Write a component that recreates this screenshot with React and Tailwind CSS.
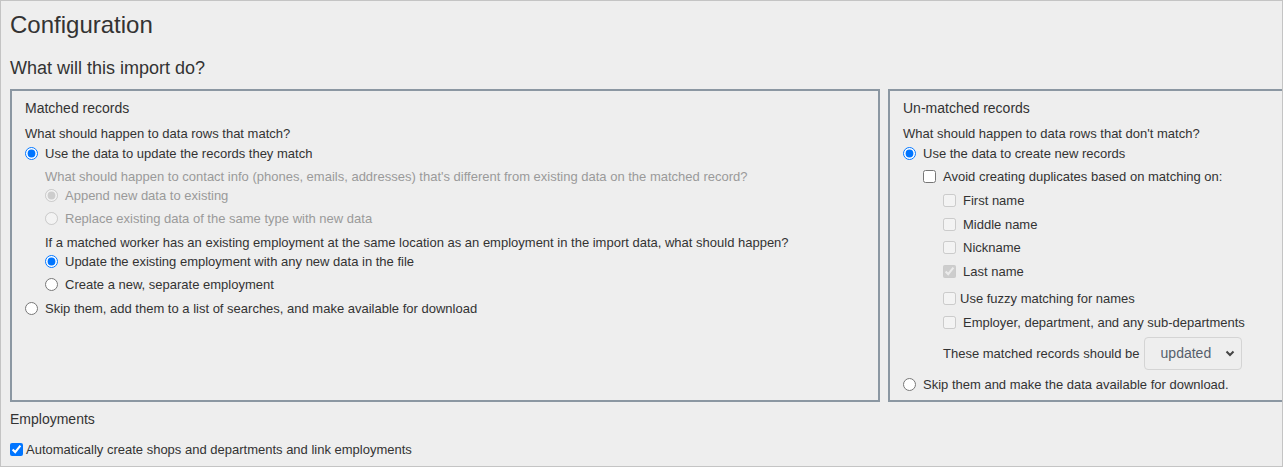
import { useState } from "react";

const font = { fontFamily: '"Liberation Sans", Arial, sans-serif' };

function Radio({ checked, disabled, name, label, onChange, className = "", muted }) {
  return (
    <label className={`flex h-[18px] items-center ${className}`}>
      <input
        type="radio"
        name={name}
        checked={checked}
        disabled={disabled}
        onChange={onChange}
        className="h-[13px] w-[13px] shrink-0"
      />
      <span className={`ml-[7px] whitespace-nowrap ${muted ? "text-[#9a9a9a]" : ""}`}>{label}</span>
    </label>
  );
}

function Check({ checked, disabled, label, onChange, className = "", gap = "ml-[7px]" }) {
  return (
    <label className={`flex h-[18px] items-center ${className}`}>
      <input
        type="checkbox"
        checked={checked}
        disabled={disabled}
        onChange={onChange}
        className="h-[13px] w-[13px] shrink-0"
      />
      <span className={`${gap} whitespace-nowrap`}>{label}</span>
    </label>
  );
}

export default function App() {
  const [matched, setMatched] = useState("update");
  const [employment, setEmployment] = useState("update");
  const [unmatched, setUnmatched] = useState("create");
  const [avoidDupes, setAvoidDupes] = useState(false);
  const [autoCreate, setAutoCreate] = useState(true);

  return (
    <div
      className="h-[467px] w-full overflow-hidden border border-[#c4c4c4] bg-[#eeeeee] pl-[9px] text-[13px] leading-[15px] text-[#333333]"
      style={font}
    >
      <h1 className="mt-[10px] text-[24px] leading-[28px]">Configuration</h1>
      <h2 className="mt-[18px] text-[18px] leading-[22px]">What will this import do?</h2>

      <div className="mt-[10px] flex gap-[8px]">
        <section className="h-[313px] w-[870px] shrink-0 border-2 border-[#8b97a2] px-[13px]">
          <div className="mt-[8px] flex h-[18px] items-center text-[14px]">Matched records</div>
          <div className="mt-[7px] flex h-[18px] items-center">What should happen to data rows that match?</div>
          <Radio
            className="mt-[2px]"
            name="matched"
            label="Use the data to update the records they match"
            checked={matched === "update"}
            onChange={() => setMatched("update")}
          />
          <div className="ml-[20px]">
            <div className="mt-[5px] flex h-[18px] items-center text-[#9a9a9a]">
              What should happen to contact info (phones, emails, addresses) that's different from existing data on the matched record?
            </div>
            <Radio className="mt-[1px]" name="contact" label="Append new data to existing" checked disabled muted readOnly />
            <Radio className="mt-[5px]" name="contact" label="Replace existing data of the same type with new data" checked={false} disabled muted />
            <div className="mt-[6px] flex h-[18px] items-center">
              If a matched worker has an existing employment at the same location as an employment in the import data, what should happen?
            </div>
            <Radio
              className="mt-[1px]"
              name="employment"
              label="Update the existing employment with any new data in the file"
              checked={employment === "update"}
              onChange={() => setEmployment("update")}
            />
            <Radio
              className="mt-[5px]"
              name="employment"
              label="Create a new, separate employment"
              checked={employment === "new"}
              onChange={() => setEmployment("new")}
            />
          </div>
          <Radio
            className="mt-[6px]"
            name="matched"
            label="Skip them, add them to a list of searches, and make available for download"
            checked={matched === "skip"}
            onChange={() => setMatched("skip")}
          />
        </section>

        <section className="h-[313px] w-[400px] shrink-0 border-2 border-[#8b97a2] px-[13px]">
          <div className="mt-[8px] flex h-[18px] items-center text-[14px]">Un-matched records</div>
          <div className="mt-[7px] flex h-[18px] items-center">What should happen to data rows that don't match?</div>
          <Radio
            className="mt-[2px]"
            name="unmatched"
            label="Use the data to create new records"
            checked={unmatched === "create"}
            onChange={() => setUnmatched("create")}
          />
          <div className="ml-[20px]">
            <Check
              className="mt-[5px]"
              label="Avoid creating duplicates based on matching on:"
              checked={avoidDupes}
              onChange={() => setAvoidDupes(!avoidDupes)}
            />
            <div className="ml-[20px]">
              <Check className="mt-[6px]" label="First name" checked={false} disabled />
              <Check className="mt-[6px]" label="Middle name" checked={false} disabled />
              <Check className="mt-[5px]" label="Nickname" checked={false} disabled />
              <Check className="mt-[6px]" label="Last name" checked disabled readOnly />
              <Check className="mt-[9px]" gap="ml-[4px]" label="Use fuzzy matching for names" checked={false} disabled />
              <Check className="mt-[6px]" label="Employer, department, and any sub-departments" checked={false} disabled />
              <div className="mt-[6px] flex items-center">
                <span className="whitespace-nowrap">These matched records should be</span>
                <div className="relative ml-[4px]">
                  <select
                    defaultValue="updated"
                    disabled
                    className="h-[33px] w-[98px] appearance-none rounded-[4px] border border-[#d4d4d4] bg-transparent pl-[16px] text-[14px] text-[#56606c] opacity-100"
                  >
                    <option value="updated">updated</option>
                    <option value="skipped">skipped</option>
                  </select>
                  <svg
                    className="pointer-events-none absolute right-[7px] top-[13px]"
                    width="10"
                    height="7"
                    viewBox="0 0 10 7"
                  >
                    <path d="M1.5 1.5 L5 5 L8.5 1.5" fill="none" stroke="#444" strokeWidth="2" />
                  </svg>
                </div>
              </div>
            </div>
          </div>
          <Radio
            className="mt-[5px]"
            name="unmatched"
            label="Skip them and make the data available for download."
            checked={unmatched === "skip"}
            onChange={() => setUnmatched("skip")}
          />
        </section>
      </div>

      <div className="mt-[8px] flex h-[18px] items-center text-[14px]">Employments</div>
      <Check
        className="mt-[12px]"
        gap="ml-[3px]"
        label="Automatically create shops and departments and link employments"
        checked={autoCreate}
        onChange={() => setAutoCreate(!autoCreate)}
      />
    </div>
  );
}
